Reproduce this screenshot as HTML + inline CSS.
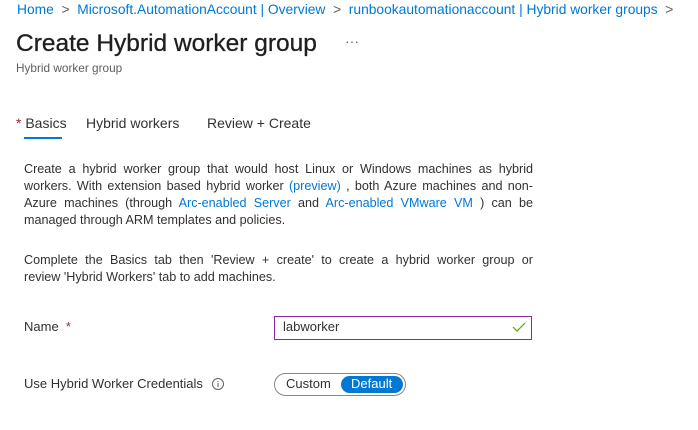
<!DOCTYPE html>
<html><head><style>
body{margin:0;width:698px;height:430px;background:#fff;font-family:"Liberation Sans",sans-serif;color:#323130;position:relative;overflow:hidden}
.a{position:absolute;white-space:nowrap}
.l{color:#0078d4}
.p{position:absolute;left:24px;width:509px;font-size:12.6px;line-height:17px}
.p div{text-align:justify;text-align-last:justify;white-space:nowrap}
.p div.e{text-align-last:left}
</style></head><body>
<div class="a l" style="left:17px;top:2px;font-size:13.8px">Home <span style="color:#605e5c">&nbsp;&gt;&nbsp;</span> Microsoft.AutomationAccount | Overview <span style="color:#605e5c">&nbsp;&gt;&nbsp;</span> runbookautomationaccount | Hybrid worker groups <span style="color:#605e5c">&nbsp;&gt;</span></div>
<div class="a" style="left:16px;top:30px;font-size:24.5px;color:#201f1e;-webkit-text-stroke:0.3px #201f1e">Create Hybrid worker group</div>
<div class="a" style="left:345px;top:33px;font-size:14px;color:#605e5c">···</div>
<div class="a" style="left:16px;top:61px;font-size:11.8px;color:#605e5c">Hybrid worker group</div>
<div class="a" style="left:16px;top:115px;font-size:14px"><span style="color:#a4262c">*</span> Basics</div>
<div style="position:absolute;left:24px;top:137px;width:38px;height:2px;background:#0078d4"></div>
<div class="a" style="left:86px;top:115px;font-size:14px">Hybrid workers</div>
<div class="a" style="left:207px;top:115px;font-size:14px">Review + Create</div>
<div class="p" style="top:161px">
<div>Create a hybrid worker group that would host Linux or Windows machines as hybrid</div>
<div>workers. With extension based hybrid worker <span class="l">(preview)</span> , both Azure machines and non-</div>
<div>Azure machines (through <span class="l">Arc-enabled Server</span> and <span class="l">Arc-enabled VMware VM</span> ) can be</div>
<div class="e">managed through ARM templates and policies.</div>
</div>
<div class="p" style="top:252px">
<div>Complete the Basics tab then 'Review + create' to create a hybrid worker group or</div>
<div class="e">review 'Hybrid Workers' tab to add machines.</div>
</div>
<div class="a" style="left:24px;top:319px;font-size:13px">Name <span style="color:#a4262c">&nbsp;*</span></div>
<div style="position:absolute;left:274px;top:316px;width:256px;height:22px;border:1px solid #8e24aa"></div>
<div class="a" style="left:283px;top:319px;font-size:13px">labworker</div>
<svg class="a" style="left:512px;top:321px" width="14" height="12"><path d="M1 6l4 4 8-8" fill="none" stroke="#57a300" stroke-width="1.2"/></svg>
<div class="a" style="left:24px;top:376px;font-size:13px">Use Hybrid Worker Credentials</div>
<svg class="a" style="left:211px;top:377px" width="14" height="14"><circle cx="7" cy="7" r="5.5" fill="none" stroke="#605e5c"/><path d="M7 6v4M7 4v1" stroke="#605e5c"/></svg>
<div style="position:absolute;left:274px;top:373px;width:130px;height:21px;border:1px solid #8a8886;border-radius:12px"></div>
<div class="a" style="left:286px;top:376px;font-size:13px">Custom</div>
<div style="position:absolute;left:341px;top:376px;width:62px;height:17px;background:#0078d4;border-radius:9px"></div>
<div class="a" style="left:351px;top:376px;font-size:13px;color:#fff">Default</div>
</body></html>
